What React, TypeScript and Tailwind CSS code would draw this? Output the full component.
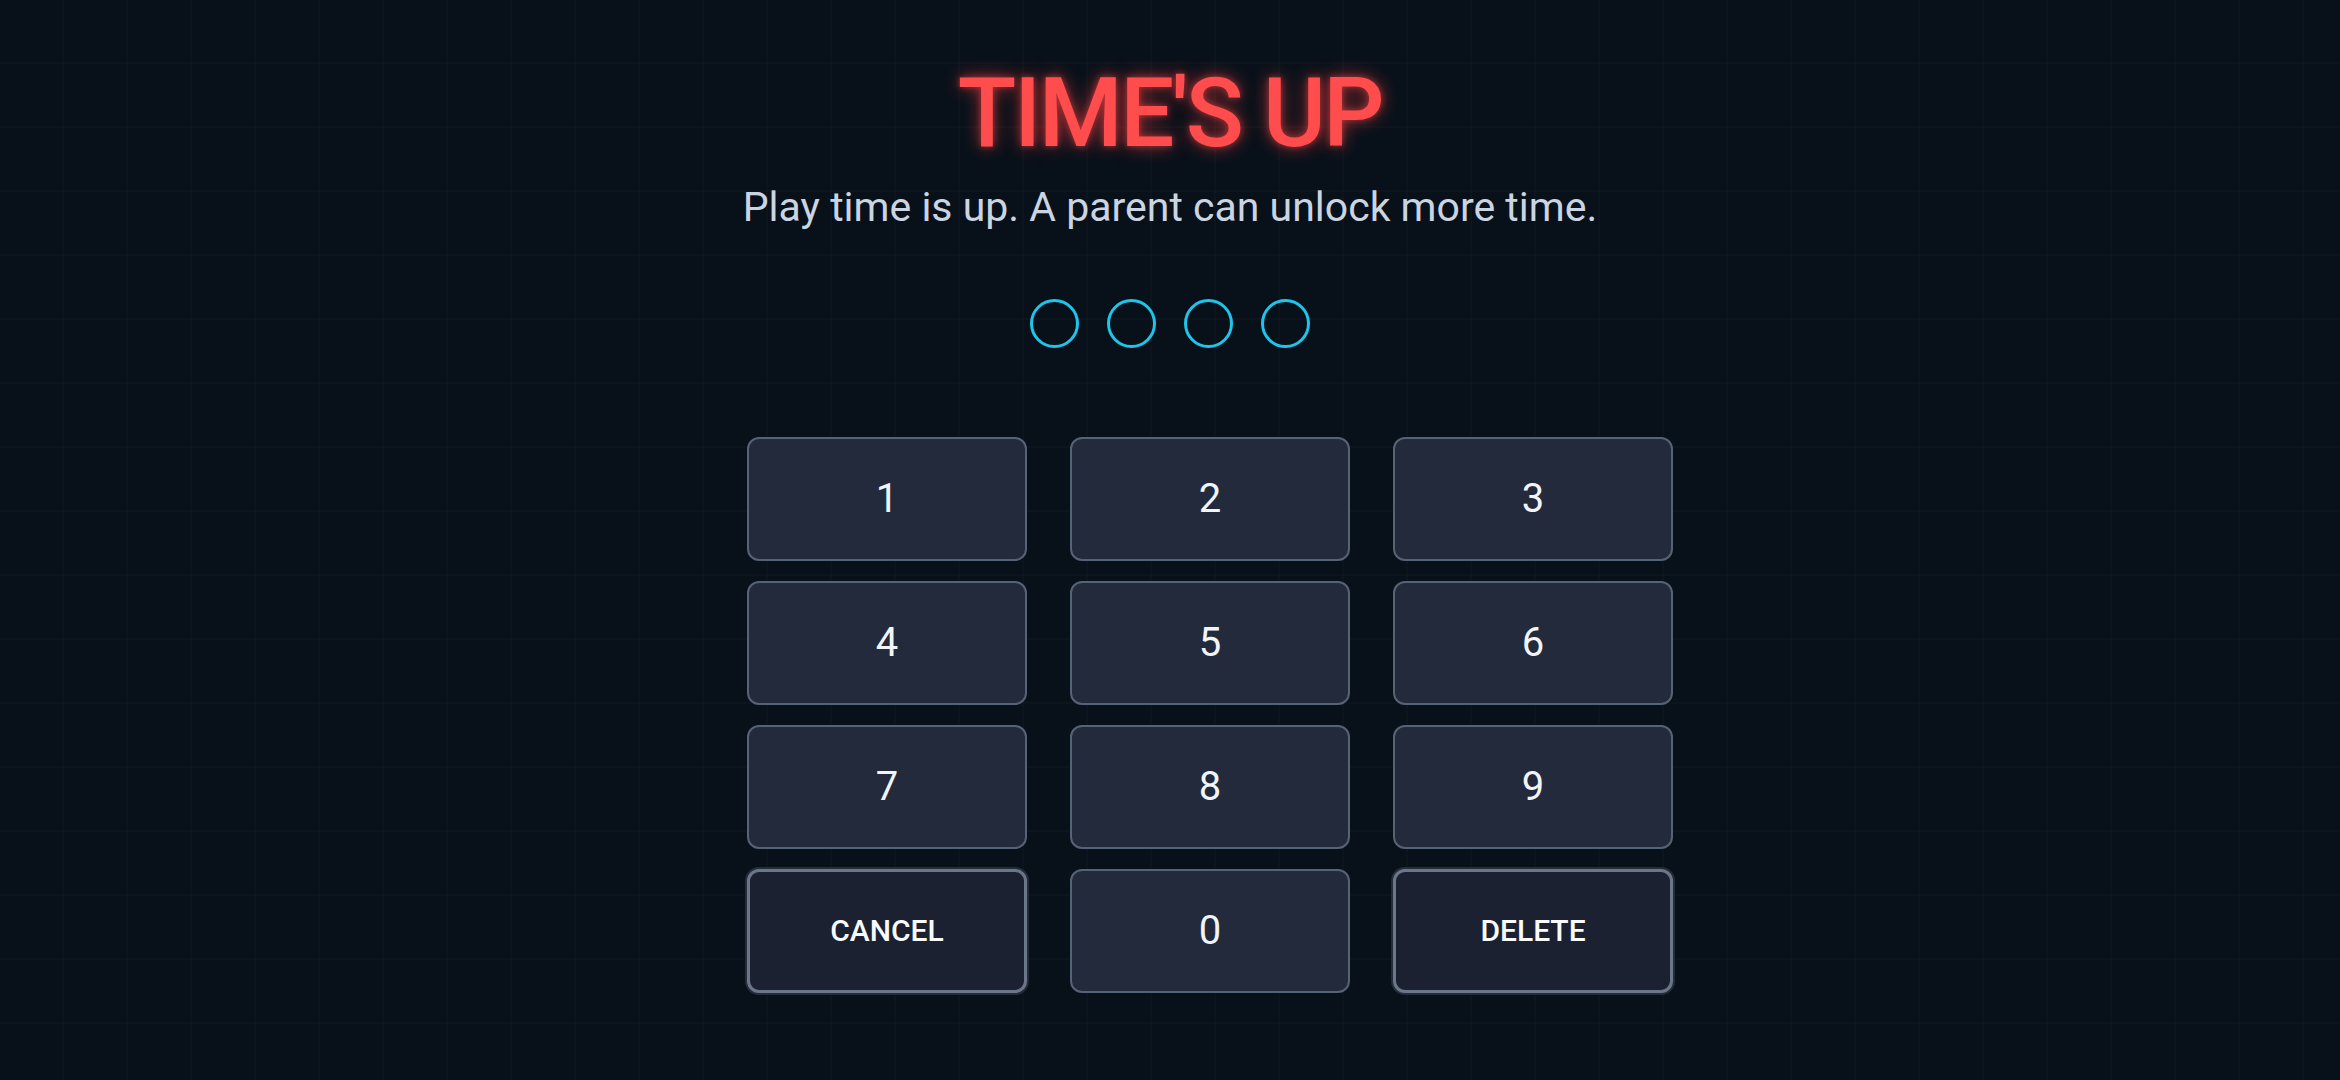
import React from "react";

const digits = ["1", "2", "3", "4", "5", "6", "7", "8", "9"];

function DigitKey({ label }: { label: string }) {
  return (
    <button className="h-[124px] w-[280px] rounded-xl border-2 border-[#566275] bg-[#232a3b] text-[40px] leading-none font-normal text-[#f1f5f9] flex items-center justify-center">
      {label}
    </button>
  );
}

function ActionKey({ label }: { label: string }) {
  return (
    <button className="h-[124px] w-[280px] rounded-xl border-[3px] border-[#6b7789] bg-[#1b2131] shadow-[0_0_0_2px_#252d3a] text-[30px] leading-none font-medium text-[#f8fafc] flex items-center justify-center">
      {label}
    </button>
  );
}

export default function App() {
  return (
    <div
      className="w-[2340px] h-[1080px] overflow-hidden bg-[#08111a] bg-[linear-gradient(to_right,rgba(255,255,255,0.016)_2px,transparent_2px),linear-gradient(to_bottom,rgba(255,255,255,0.016)_2px,transparent_2px)] bg-[size:64px_64px] bg-[position:-2px_-2px] flex flex-col items-center"
      style={{ fontFamily: "Roboto, 'Noto Sans', sans-serif" }}
    >
      <h1 className="mt-[65px] h-[96px] text-[96px] leading-[96px] font-medium tracking-[-0.025em] text-[#ff4d4d] [text-shadow:0_0_18px_rgba(255,60,60,0.65),0_0_6px_rgba(255,80,80,0.5)]">
        TIME'S UP
      </h1>
      <p className="mt-[22px] h-[48px] text-[41px] leading-[48px] text-[#cbd5e1]">
        Play time is up. A parent can unlock more time.
      </p>
      <div className="mt-[68px] flex gap-[28px]">
        {[0, 1, 2, 3].map((i) => (
          <div key={i} className="h-[49px] w-[49px] rounded-full border-[3px] border-[#1ec4ea]" />
        ))}
      </div>
      <div className="mt-[89px] ml-[80px] grid grid-cols-3 gap-x-[43px] gap-y-[20px]">
        {digits.map((d) => (
          <DigitKey key={d} label={d} />
        ))}
        <ActionKey label="CANCEL" />
        <DigitKey label="0" />
        <ActionKey label="DELETE" />
      </div>
    </div>
  );
}
